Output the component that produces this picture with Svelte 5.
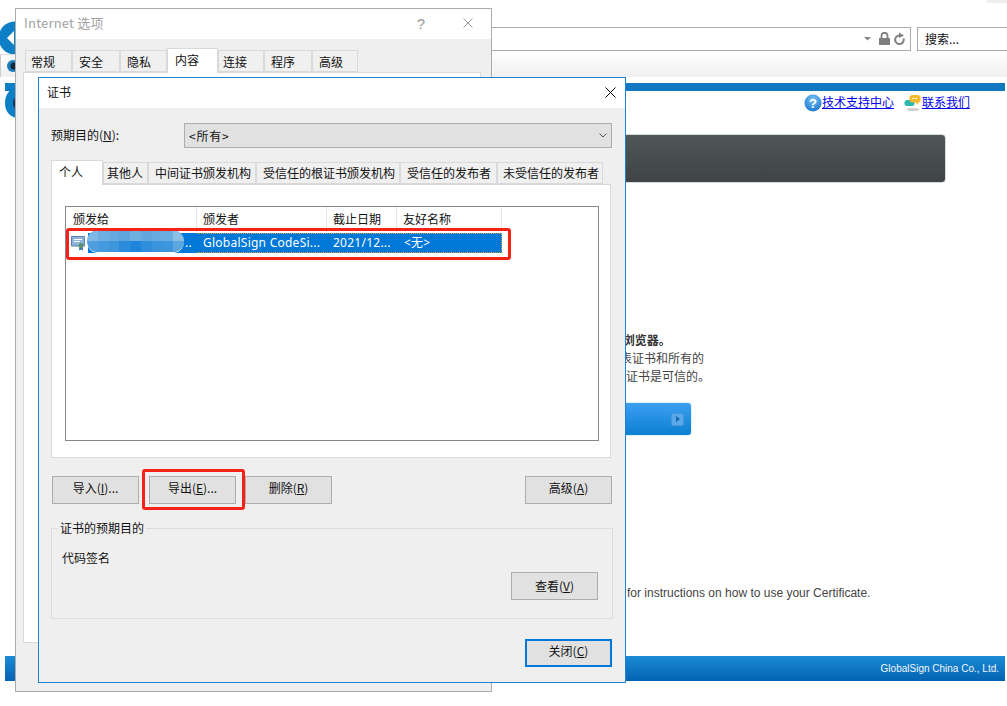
<script>
  const outerTabs = [
    { label: '常规', w: 47, pad: 5 }, { label: '安全', w: 48, pad: 6 }, { label: '隐私', w: 47, pad: 6 },
    { label: '内容', w: 51, pad: 7, active: true }, { label: '连接', w: 46, pad: 4 }, { label: '程序', w: 48, pad: 6 }, { label: '高级', w: 46, pad: 6 }
  ];
  const certTabs = [
    { label: '个人', w: 52, pad: 7, active: true }, { label: '其他人', w: 45, pad: 3 }, { label: '中间证书颁发机构', w: 108, pad: 6 },
    { label: '受信任的根证书颁发机构', w: 144, pad: 6 }, { label: '受信任的发布者', w: 97, pad: 6 }, { label: '未受信任的发布者', w: 106, pad: 5 }
  ];
  const columns = [
    { label: '颁发给', w: 131 }, { label: '颁发者', w: 130 }, { label: '截止日期', w: 70 }, { label: '友好名称', w: 105 }
  ];
  const mosaic = [
    '#7fb8e4','#6eaee0','#66a9df','#5ea5de','#6db0e2','#62a8de','#69acdf','#6aaddf','#8cbfe6',
    '#4f9ddd','#449adf','#3e96dd','#2b8cdb','#1f85da','#2f8edb','#3a93dc','#3d95dc','#5ca6e2'
  ];
</script>

<div class="page">
  <div class="browser">
    <div class="corner"></div>
    <div class="address-row">
      <div class="address">
        <svg width="41" height="14" viewBox="0 0 41 14">
          <path d="M0 5h7l-3.500 3.500z" fill="#888"/>
          <path d="M15 6h11v7H15z" fill="#808080"/>
          <path d="M17.500 6V3.800a3 3 0 0 1 6 0V6" fill="none" stroke="#808080" stroke-width="1.800"/>
          <path d="M35.500 3.500a4.300 4.300 0 1 0 4 3" fill="none" stroke="#808080" stroke-width="2"/>
          <path d="M35 0.500l5 3-5 2.500z" fill="#808080"/>
        </svg>
      </div>
      <div class="search">搜索...</div>
    </div>
    <div class="toolbar"></div>
    <div class="site">
      <div class="top-strip"></div>
      <div class="links">
        <svg width="18" height="20" viewBox="0 0 18 20">
          <defs>
            <radialGradient id="q" cx="50%" cy="30%" r="70%"><stop offset="0" stop-color="#7cc4f4"/><stop offset="1" stop-color="#1a78d0"/></radialGradient>
          </defs>
          <circle cx="9" cy="10" r="8.500" fill="url(#q)"/>
          <text x="9" y="15" class="q-mark">?</text>
        </svg>
        <a href="#support" class="support">技术支持中心</a>
        <svg width="18" height="18" viewBox="0 0 18 18">
          <ellipse cx="9" cy="15.500" rx="6.500" ry="1.600" fill="#cfcfcf"/>
          <rect x="0.500" y="6" width="10" height="6" rx="2.500" fill="#2cb8b0"/>
          <rect x="5.500" y="1" width="11" height="7.500" rx="3" fill="#f3b92e"/>
          <path d="M12 8l1 3 2-3z" fill="#f3b92e"/>
          <path d="M8 4.500h6" stroke="#fff" stroke-width="1" stroke-dasharray="2 1"/>
        </svg>
        <a href="#contact">联系我们</a>
      </div>
      <div class="banner"></div>
      <div class="copy">
        <p class="l1">请使用微软公司的 浏览器。</p>
        <p>您需要先安装此代表证书和所有的</p>
        <p class="l3">并确认安装的这些证书是可信的。</p>
      </div>
      <div class="cta"><span class="cta-icon"><i></i></span></div>
      <p class="instructions">for instructions on how to use your Certificate.</p>
      <div class="footer">GlobalSign China Co., Ltd.</div>
    </div>
    <div class="back"><svg width="15" height="34" viewBox="0 0 15 34"><path d="M15 .500a16.500 16.500 0 0 0 0 33z" fill="#0d7fc6"/><path d="M14 10l-7 7 7 7z" fill="#fff"/></svg></div>
    <div class="eye-tab"><svg width="15" height="22" viewBox="0 0 15 22"><circle cx="12" cy="11" r="6" fill="#1c7cc0"/><circle cx="13" cy="11" r="3.500" fill="#10283c"/></svg></div>
    <div class="logo"><svg width="11" height="36" viewBox="0 0 11 36"><path d="M0 0h11v6H0z" fill="#0d7fc6"/><path d="M11 5C4 6 0 12 0 20s4 13 11 15z" fill="#0d7fc6"/><path d="M11 14a6 6 0 0 0-3 6 6 6 0 0 0 3 6z" fill="#123d60"/></svg></div>
  </div>

  <section class="win-outer">
    <header class="outer-title">
      <span class="outer-name">Internet 选项</span>
      <span class="help">?</span>
      <svg class="outer-close" width="10" height="10" viewBox="0 0 10 10"><path d="M.5.500l9 9M9.500.500l-9 9" stroke="#999" fill="none"/></svg>
    </header>
    <div class="outer-tabs">
      {#each outerTabs as t}
        <div class="otab" class:on={t.active} style:width="{t.w}px" style:padding-left="{t.pad}px">{t.label}</div>
      {/each}
    </div>
    <div class="outer-panel"></div>
  </section>

  <section class="win-cert">
    <header class="cert-title">
      <span>证书</span>
      <svg width="11" height="11" viewBox="0 0 11 11"><path d="M.5.500l10 10M10.500.500l-10 10" stroke="#000" fill="none"/></svg>
    </header>
    <div class="cert-body">
      <div class="purpose">
        <span class="purpose-label">预期目的(<u>N</u>):</span>
        <div class="select">
          <span>&lt;所有&gt;</span>
          <svg width="8" height="5" viewBox="0 0 8 5"><path d="M.5.500l3.500 3.500 3.500-3.500" fill="none" stroke="#555"/></svg>
        </div>
      </div>
      <div class="cert-tabs">
        {#each certTabs as t}
          <div class="ctab" class:on={t.active} style:width="{t.w}px" style:padding-left="{t.pad}px">{t.label}</div>
        {/each}
      </div>
      <div class="tab-panel">
        <div class="list">
          <div class="list-head">
            {#each columns as c}
              <div class="col" style:width="{c.w}px">{c.label}</div>
            {/each}
          </div>
          <div class="list-row">
            <div class="cell first">
              <svg class="cert-ico" width="16" height="15" viewBox="0 0 16 15">
                <path d="M.5.500h13v9.500H.5z" fill="#8db4dc" stroke="#5b7fa8"/>
                <path d="M3 3.500h8M3 5.500h6" stroke="#fff"/>
                <path d="M8.500 10l-.5 4.500 2-1 2 1-.5-4.500z" fill="#2c6fb0"/>
                <circle cx="10" cy="9.500" r="2.500" fill="#5f8f6a"/>
              </svg>
              <span class="dots">..</span>
            </div>
            <div class="cell second">GlobalSign CodeSi...</div>
            <div class="cell third">2021/12...</div>
            <div class="cell fourth">&lt;无&gt;</div>
          </div>
        </div>
      </div>
      <div class="actions">
        <button>导入(<u>I</u>)...</button>
        <button>导出(<u>E</u>)...</button>
        <button>删除(<u>R</u>)</button>
        <button class="push">高级(<u>A</u>)</button>
      </div>
      <fieldset class="group">
        <legend>证书的预期目的</legend>
        <p>代码签名</p>
        <button class="view">查看(<u>V</u>)</button>
      </fieldset>
      <div class="close-row">
        <button class="primary">关闭(<u>C</u>)</button>
      </div>
    </div>
  </section>

  <div class="redact">
    {#each mosaic as c}
      <span style:background={c}></span>
    {/each}
  </div>
  <div class="mark mark-row"></div>
  <div class="mark mark-btn"></div>
</div>

<style>
  :global(body) { margin: 0; background: #fff; }
  .page {
    position: relative;
    width: 1007px;
    height: 706px;
    overflow: hidden;
    background: #fff;
    font-family: "Noto Sans CJK SC", "Noto Sans", sans-serif;
    font-size: 12px;
    color: #111;
  }
  p { margin: 0; }
  u { text-underline-offset: 1px; }

  /* browser behind the dialogs */
  .browser { position: absolute; inset: 0; }
  .corner { position: absolute; right: 0; top: 0; width: 20px; height: 3px; background: #eee; }
  .address-row { display: flex; gap: 6px; padding: 27px 0 0 300px; height: 23px; }
  .address {
    width: 611px; height: 24px; box-sizing: border-box; border: 1px solid #ababab;
    display: flex; justify-content: flex-end; align-items: center; padding-right: 5px;
  }
  .search {
    flex: 1; height: 24px; box-sizing: border-box; border: 1px solid #ababab; border-right: 0;
    padding-left: 7px; line-height: 22px; color: #111; white-space: nowrap;
  }
  .toolbar { height: 27px; background: linear-gradient(#fff, #f0f0f0); }
  .site { margin: 6px 2px 0 5px; position: relative; }
  .top-strip { height: 8px; background: #1279c0; }
  .links {
    display: flex; justify-content: flex-end; align-items: center; height: 22px;
    padding-right: 35px; margin-top: 1px;
  }
  .links a { color: #00e; text-decoration: underline; line-height: 20px; margin-top: -2px; }
  .links .support { margin-right: 10px; }
  .q-mark { font: bold 13px "Liberation Sans", sans-serif; fill: #fff; text-anchor: middle; }
  .banner {
    margin: 20px 59px 0 400px; height: 47px; border: 1px solid #d5dbdf; border-radius: 4px;
    background: linear-gradient(#505759, #3f4344);
  }
  .copy { margin: 148px 0 0 519px; line-height: 18px; color: #444; white-space: nowrap; }
  .l1 { font-weight: 700; color: #333; }
  .l3 { margin-left: 6px; }
  .cta {
    margin: 18px 0 0 500px; width: 186px; height: 32px; box-sizing: border-box;
    border-radius: 3px; background: linear-gradient(#3d9ff2, #0a7fd0);
    box-shadow: 0 0 2px #9cc9ee; display: flex; justify-content: flex-end; align-items: center; padding-right: 7px;
  }
  .cta-icon {
    width: 11px; height: 11px; border-radius: 2px; background: #5aa8ea; border: 1px solid #4b96d8;
    display: flex; align-items: center; justify-content: center;
  }
  .cta-icon i { border-left: 4px solid #1467b0; border-top: 3px solid transparent; border-bottom: 3px solid transparent; }
  .instructions {
    margin: 150px 0 0 622px; font-family: "Liberation Sans", Arial, sans-serif; color: #444; line-height: 16px; white-space: nowrap;
  }
  .footer {
    margin-top: 55px; height: 25px; background: linear-gradient(#1c8cd6, #0262b1); color: #f2f7fb;
    display: flex; align-items: center; justify-content: flex-end; padding-right: 6px;
    font: 10px "Liberation Sans", Arial, sans-serif;
  }
  .back { position: absolute; left: 0; top: 21px; }
  .eye-tab { position: absolute; left: 0; top: 54px; border-top: 1px solid #ddd; border-left: 1px solid #ccc; height: 22px; width: 15px; overflow: hidden; }
  .logo { position: absolute; left: 5px; top: 83px; }

  /* Internet options window */
  .win-outer {
    position: absolute; left: 15px; top: 8px; width: 477px; height: 684px; box-sizing: border-box;
    border: 1px solid #ababab; background: #efefef; display: flex; flex-direction: column;
  }
  .outer-title {
    height: 30px; flex: none; background: #fff; display: flex; align-items: center; color: #a2a2a2;
  }
  .outer-name { margin: -4px 0 0 8px; font-size: 13px; flex: 1; letter-spacing: .2px; }
  .help { margin: 0 38px 2px 0; font: 15px "Liberation Sans", sans-serif; color: #999; }
  .outer-close { margin: 0 18px 2px 0; }
  .outer-tabs { display: flex; margin: 11px 0 0 9px; height: 22px; align-items: flex-end; flex: none; }
  .otab {
    height: 22px; box-sizing: border-box; border: 1px solid #d9d9d9;
    background: #f0f0f0; display: flex; align-items: center; color: #111;
  }
  .otab.on { height: 25px; background: #fff; border-bottom: 0; padding-bottom: 3px; position: relative; z-index: 1; margin-bottom: -1px; }
  .outer-panel { margin: 0 10px 0 7px; height: 571px; flex: none; background: #fff; border: 1px solid #d9d9d9; box-sizing: border-box; }

  /* Certificate dialog */
  .win-cert {
    position: absolute; left: 38px; top: 77px; width: 588px; height: 606px; box-sizing: border-box;
    border: 1px solid #1883d7; background: #efefef; display: flex; flex-direction: column;
  }
  .cert-title {
    height: 30px; flex: none; background: #fff; display: flex; align-items: center; justify-content: space-between;
    padding: 0 9px 0 8px; color: #111;
  }
  .cert-title span { margin-top: -4px; }
  .cert-title svg { margin-bottom: 2px; }
  .cert-body { padding: 15px 13px 0 12px; flex: 1; position: relative; }
  .purpose { display: flex; align-items: center; height: 25px; }
  .purpose-label { width: 133px; margin-top: -2px; }
  .select {
    width: 428px; height: 25px; box-sizing: border-box; border: 1px solid #adadad; background: #e1e1e1;
    display: flex; align-items: center; justify-content: space-between; padding: 0 4px 0 4px; letter-spacing: .8px;
  }
  .select span { margin-top: -1px; }
  .cert-tabs { display: flex; align-items: flex-end; height: 25px; margin-top: 11px; }
  .ctab {
    height: 22px; box-sizing: border-box; border: 1px solid #d9d9d9; background: #f0f0f0;
    display: flex; align-items: center; white-space: nowrap; padding-bottom: 2px;
  }
  .ctab.on { height: 25px; background: #fff; border-bottom: 0; padding-bottom: 4px; position: relative; z-index: 1; margin-bottom: -1px; }
  .tab-panel {
    height: 274px; width: 560px; box-sizing: border-box; border: 1px solid #d9d9d9; background: #fff; padding: 21px 11px 0 13px;
  }
  .list { height: 235px; box-sizing: border-box; border: 1px solid #828790; background: #fff; }
  .list-head { display: flex; height: 25px; }
  .col {
    box-sizing: border-box; padding: 2px 0 0 6px; border-right: 1px solid #e5e5e5; line-height: 20px;
  }
  .col:first-child { padding-left: 7px; }
  .list-row {
    display: flex; margin: 1px 0 0 2px; width: 434px; height: 20px; box-sizing: border-box;
    background: #0078d7; color: #fff; outline: 1px dotted #c9a24a; outline-offset: -1px; line-height: 20px;
  }
  .cell { white-space: nowrap; box-sizing: border-box; font-family: "Noto Sans", "Noto Sans CJK SC", sans-serif; letter-spacing: .25px; }
  .first { width: 128px; position: relative; background: linear-gradient(90deg, #fff 0 20px, #0078d7 20px); }
  .cert-ico { position: absolute; left: 3px; top: 3px; }
  .dots { position: absolute; right: 4px; top: 0; }
  .second { width: 130px; padding-left: 7px; }
  .third { width: 70px; padding-left: 7px; }
  .fourth { width: 106px; padding-left: 8px; }
  button {
    width: 87px; height: 28px; box-sizing: border-box; border: 1px solid #adadad; background: #e1e1e1;
    font: inherit; color: #111; padding: 0 0 5px; margin: 0;
  }
  .actions { display: flex; gap: 10px; margin: 18px 0 0 1px; width: 560px; }
  .actions button:nth-child(2) { margin-right: -1px; }
  .actions .push { margin-left: auto; }
  .group {
    margin: 17px 0 0; padding: 0; width: 562px; height: 98px; box-sizing: border-box; border: 1px solid #dcdcdc; border-radius: 0;
    display: flex; flex-direction: column; min-width: 0;
  }
  .group legend { margin-left: 6px; padding: 0 2px; line-height: 14px; }
  .group p { margin: 14px 0 0 10px; line-height: 18px; }
  .view { margin: 5px 0 0 459px; padding-bottom: 2px; }
  .close-row { display: flex; justify-content: flex-end; margin: 20px 0 0; width: 561px; }
  .primary { border: 2px solid #0078d7; padding-bottom: 6px; }

  /* annotations on top of the screenshot */
  .redact {
    position: absolute; left: 87px; top: 230px; width: 97px; height: 22px; border-radius: 11px; overflow: hidden;
    display: grid; grid-template-columns: repeat(9, 1fr); grid-auto-rows: 11px; box-shadow: 0 1px 0 #fff;
  }
  .mark { position: absolute; box-sizing: border-box; border: 3px solid #f5221a; border-radius: 3px; }
  .mark-row { left: 66px; top: 228px; width: 445px; height: 32px; }
  .mark-btn { left: 142px; top: 469px; width: 103px; height: 41px; }
</style>
